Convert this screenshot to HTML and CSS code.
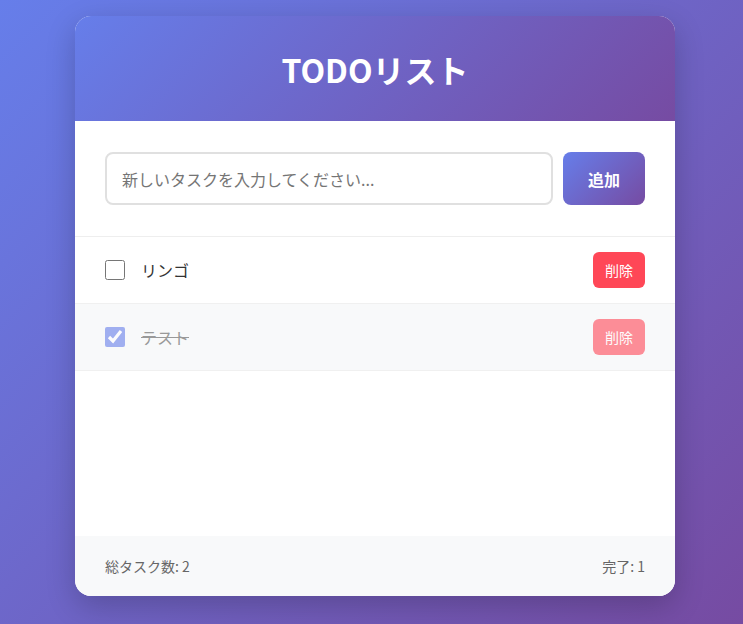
FILE: index.html
```html
<!DOCTYPE html>
<html lang="ja">
<head>
<meta charset="utf-8">
<title>TODOリスト</title>
<link rel="stylesheet" href="styles.css">
</head>
<body>
<div class="page">
  <div class="card">
    <header class="card-header">
      <h1 class="title">TODOリスト</h1>
    </header>
    <div class="input-section">
      <input class="task-input" type="text" placeholder="新しいタスクを入力してください...">
      <button class="add-btn">追加</button>
    </div>
    <ul class="todo-list">
      <li class="todo-item">
        <input class="todo-check" type="checkbox">
        <span class="todo-text">リンゴ</span>
        <button class="delete-btn">削除</button>
      </li>
      <li class="todo-item completed">
        <input class="todo-check" type="checkbox" checked>
        <span class="todo-text">テスト</span>
        <button class="delete-btn">削除</button>
      </li>
    </ul>
    <footer class="card-footer">
      <span>総タスク数: 2</span>
      <span>完了: 1</span>
    </footer>
  </div>
</div>
</body>
</html>
```

FILE: styles.css
```css
* { box-sizing: border-box; }
html, body { margin: 0; padding: 0; }
body {
  font-family: "Noto Sans CJK JP", "Noto Sans", sans-serif;
  background: linear-gradient(135deg, #667eea 0%, #764ba2 100%);
  min-height: 624px;
  overflow: hidden;
}
.page {
  padding: 16px 0 0 7px;
  display: flex;
  justify-content: center;
}
.card {
  width: 600px;
  background: #fff;
  border-radius: 16px;
  overflow: hidden;
  box-shadow: 0 10px 30px rgba(0, 0, 0, 0.2);
}
.card-header {
  height: 105px;
  background: linear-gradient(135deg, #667eea 0%, #764ba2 100%);
  display: flex;
  align-items: center;
  justify-content: center;
}
.title {
  margin: 0;
  color: #fff;
  font-size: 32px;
  font-weight: 700;
  line-height: 1;
}
.input-section {
  display: flex;
  gap: 10px;
  padding: 31px 30px;
  border-bottom: 1px solid #eee;
}
.task-input {
  flex: 1;
  height: 53px;
  padding: 0 15px;
  border: 2px solid #e0e0e0;
  border-radius: 8px;
  font-family: inherit;
  font-size: 16px;
  color: #333;
  outline: none;
}
.task-input::placeholder { color: #757575; }
.add-btn {
  width: 82px;
  height: 53px;
  border: none;
  border-radius: 8px;
  background: linear-gradient(135deg, #667eea 0%, #764ba2 100%);
  color: #fff;
  font-family: inherit;
  font-size: 16px;
  font-weight: 700;
}
.todo-list {
  list-style: none;
  margin: 0;
  padding: 0;
  min-height: 299px;
}
.todo-item {
  display: flex;
  align-items: center;
  height: 67px;
  padding: 0 30px;
  border-bottom: 1px solid #f0f0f0;
}
.todo-check {
  width: 20px;
  height: 20px;
  margin: 0 16px 0 0;
  accent-color: #667eea;
}
.todo-text {
  flex: 1;
  font-size: 16px;
  color: #333;
}
.delete-btn {
  width: 52px;
  height: 36px;
  border: none;
  border-radius: 6px;
  background: #ff4757;
  color: #fff;
  font-family: inherit;
  font-size: 14px;
}
.todo-item.completed {
  background: #f8f9fa;
}
.todo-item.completed .todo-check,
.todo-item.completed .delete-btn { opacity: 0.6; }
.todo-item.completed .todo-text {
  color: #999;
  text-decoration: line-through;
}
.card-footer {
  display: flex;
  justify-content: space-between;
  align-items: center;
  height: 60px;
  padding: 0 30px;
  background: #f8f9fa;
  font-size: 14px;
  color: #666;
}
```
